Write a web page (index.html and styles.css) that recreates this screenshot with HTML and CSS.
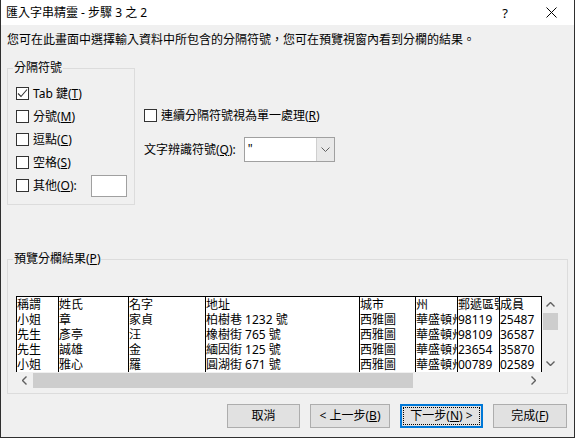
FILE: index.html
```html
<!DOCTYPE html>
<html lang="zh-Hant">
<head>
  <meta charset="UTF-8" />
  <title>匯入字串精靈 - 步驟 3 之 2</title>
  <link rel="stylesheet" href="styles.css">
</head>
<body>

  <div class="window">

    <!-- TITLE BAR -->
    <div class="titlebar">
      <span class="title">匯入字串精靈 - 步驟 3 之 2</span>
      <div class="controls">
        <span class="ctl help">?</span>
        <span class="ctl close">
          <svg width="11" height="11" viewBox="0 0 11 11"><path d="M0.5 0.5 L10.5 10.5 M10.5 0.5 L0.5 10.5" stroke="#000" stroke-width="1" fill="none"/></svg>
        </span>
      </div>
    </div>

    <div class="content">
      <p class="intro">您可在此畫面中選擇輸入資料中所包含的分隔符號，您可在預覽視窗內看到分欄的結果。</p>

      <!-- OPTIONS -->
      <div class="options">
        <fieldset class="group delimiters">
          <legend>分隔符號</legend>
          <div class="group-body">
            <div class="row">
              <span class="box checked">
                <svg width="11" height="11" viewBox="0 0 11 11"><polyline points="1,5.5 4,8.5 10,1.5" stroke="#333" stroke-width="1.1" fill="none"/></svg>
              </span>
              <span>Tab 鍵(<u>T</u>)</span>
            </div>
            <div class="row"><span class="box"></span><span>分號(<u>M</u>)</span></div>
            <div class="row"><span class="box"></span><span>逗點(<u>C</u>)</span></div>
            <div class="row"><span class="box"></span><span>空格(<u>S</u>)</span></div>
            <div class="row">
              <span class="box"></span><span>其他(<u>O</u>):</span>
              <span class="other-input"></span>
            </div>
          </div>
        </fieldset>

        <div class="side">
          <div class="row">
            <span class="box"></span><span>連續分隔符號視為單一處理(<u>R</u>)</span>
          </div>
          <div class="qualifier">
            <span>文字辨識符號(<u>Q</u>):</span>
            <div class="combo">
              <span class="combo-value">"</span>
              <span class="combo-btn">
                <svg width="9" height="5" viewBox="0 0 9 5"><polyline points="0.5,0.5 4.5,4.5 8.5,0.5" stroke="#606060" stroke-width="1" fill="none"/></svg>
              </span>
            </div>
          </div>
        </div>
      </div>

      <!-- PREVIEW -->
      <fieldset class="group preview">
        <legend>預覽分欄結果(<u>P</u>)</legend>
        <div class="group-body">
          <div class="preview-box">
            <div class="pv-table" id="pv-table"></div>

            <div class="vscroll">
              <span class="arrow">
                <svg width="9" height="5" viewBox="0 0 9 5"><polyline points="0.5,4.5 4.5,0.5 8.5,4.5" stroke="#606060" stroke-width="1.4" fill="none"/></svg>
              </span>
              <span class="vthumb"></span>
              <span class="vtrack"></span>
              <span class="arrow">
                <svg width="9" height="5" viewBox="0 0 9 5"><polyline points="0.5,0.5 4.5,4.5 8.5,0.5" stroke="#606060" stroke-width="1.4" fill="none"/></svg>
              </span>
            </div>

            <div class="hscroll">
              <span class="arrow">
                <svg width="5" height="9" viewBox="0 0 5 9"><polyline points="4.5,0.5 0.5,4.5 4.5,8.5" stroke="#606060" stroke-width="1.4" fill="none"/></svg>
              </span>
              <span class="hthumb"></span>
              <span class="htrack"></span>
              <span class="arrow">
                <svg width="5" height="9" viewBox="0 0 5 9"><polyline points="0.5,0.5 4.5,4.5 0.5,8.5" stroke="#606060" stroke-width="1.4" fill="none"/></svg>
              </span>
            </div>

            <div class="corner"></div>
          </div>
        </div>
      </fieldset>

      <!-- BUTTONS -->
      <div class="buttons">
        <button class="btn cancel">取消</button>
        <button class="btn back">&lt; 上一步(<u>B</u>)</button>
        <button class="btn next">下一步(<u>N</u>) &gt;</button>
        <button class="btn finish">完成(<u>F</u>)</button>
      </div>
    </div>
  </div>

  <script>
    const rows = [
      ["稱謂", "姓氏", "名字", "地址", "城市", "州", "郵遞區號", "成員"],
      ["小姐", "章", "家貞", "柏樹巷 1232 號", "西雅圖", "華盛頓州", "98119", "25487"],
      ["先生", "彥亭", "汪", "橡樹街 765 號", "西雅圖", "華盛頓州", "98109", "36587"],
      ["先生", "誠雄", "金", "緬因街 125 號", "西雅圖", "華盛頓州", "23654", "35870"],
      ["小姐", "雅心", "羅", "圓湖街 671 號", "西雅圖", "華盛頓州", "00789", "02589"]
    ];

    const table = document.getElementById("pv-table");
    rows.forEach(row => {
      row.forEach(value => {
        const cell = document.createElement("span");
        cell.textContent = value;
        table.appendChild(cell);
      });
    });
  </script>

</body>
</html>
```

FILE: styles.css
```css
* {
  box-sizing: border-box;
}

body {
  margin: 0;
  padding: 0;
  font-family: "Noto Sans", "Noto Sans CJK TC", sans-serif;
  font-size: 12px;
  color: #000;
  background: #f0f0f0;
}

.window {
  width: 575px;
  height: 438px;
  background: #f0f0f0;
  border: 1px solid #2f2f2f;
  border-top: none;
}

/* title bar */

.titlebar {
  height: 25px;
  background: #fff;
  display: flex;
  align-items: center;
  justify-content: space-between;
  padding-left: 5px;
}

.title {
  line-height: 16px;
}

.controls {
  display: flex;
  height: 100%;
}

.ctl {
  width: 46px;
  display: flex;
  align-items: center;
  justify-content: center;
}

.help {
  font-size: 13px;
  padding-top: 1px;
}

/* content */

.content {
  padding: 7px 6px 0 6px;
}

.intro {
  margin: 0;
  line-height: 16px;
}

.options {
  display: flex;
  gap: 9px;
  margin-top: 12px;
}

.group {
  margin: 0;
  padding: 0;
  border: 1px solid #dcdcdc;
  min-width: 0;
}

.group legend {
  margin-left: 5px;
  padding: 0 1px;
  line-height: 16px;
}

.delimiters {
  width: 128px;
}

.delimiters .group-body {
  padding: 6px 7px 7px 8px;
}

.row {
  height: 23px;
  display: flex;
  align-items: center;
  line-height: 16px;
}

.box {
  width: 13px;
  height: 13px;
  border: 1px solid #333;
  background: #fff;
  margin-right: 4px;
  flex-shrink: 0;
  display: flex;
  align-items: center;
  justify-content: center;
}

.other-input {
  margin-left: auto;
  width: 36px;
  height: 22px;
  background: #fff;
  border: 1px solid #a0a0a0;
}

.side {
  padding-top: 44px;
}

.qualifier {
  display: flex;
  align-items: center;
  gap: 8px;
  margin-top: 10px;
  line-height: 16px;
}

.combo {
  width: 91px;
  height: 25px;
  border: 1px solid #a0a0a0;
  background: #fff;
  display: flex;
}

.combo-value {
  flex: 1;
  padding: 3px 0 0 3px;
  line-height: 16px;
}

.combo-btn {
  width: 18px;
  background: #e9e9e9;
  border-left: 1px solid #cfcfcf;
  display: flex;
  align-items: center;
  justify-content: center;
}

/* preview */

.preview {
  margin-top: 46px;
}

.preview .group-body {
  padding: 29px 9px 5px 8px;
}

.preview-box {
  display: grid;
  grid-template-columns: 526px 16px;
  grid-template-rows: 76px 16px;
  background: #fff;
}

.pv-table {
  display: grid;
  grid-template-columns: 42px 70px 77px 154px 56px 42px 42px 43px;
  grid-auto-rows: 15px;
  border-top: 1px solid #000;
  font-size: 12px;
  overflow: hidden;
}

.pv-table span {
  border-left: 1px solid #000;
  line-height: 15px;
  white-space: nowrap;
  overflow: hidden;
}

.pv-table span:nth-child(8n) {
  border-right: 1px solid #000;
}

.vscroll {
  background: #f0f0f0;
  display: flex;
  flex-direction: column;
}

.vscroll .arrow {
  height: 17px;
  display: flex;
  align-items: center;
  justify-content: center;
  padding-left: 1px;
}

.vthumb {
  height: 17px;
  margin-left: 1px;
  background: #cdcdcd;
}

.vtrack {
  flex: 1;
}

.hscroll {
  background: #f0f0f0;
  display: flex;
  padding-top: 1px;
}

.hscroll .arrow {
  width: 17px;
  display: flex;
  align-items: center;
  justify-content: center;
}

.hthumb {
  width: 380px;
  background: #cdcdcd;
}

.htrack {
  flex: 1;
}

.corner {
  background: #f0f0f0;
}

/* buttons */

.buttons {
  display: flex;
  justify-content: flex-end;
  gap: 10px;
  margin-top: 10px;
  padding-right: 1px;
}

.btn {
  height: 24px;
  background: #e1e1e1;
  border: 1px solid #adadad;
  font-family: inherit;
  font-size: 12px;
  color: #000;
  padding: 0;
  line-height: 16px;
}

.cancel { width: 73px; }
.back { width: 80px; }
.next { width: 83px; }
.finish { width: 74px; }

.next {
  border: 2px solid #0078d7;
  outline: 1px dotted #000;
  outline-offset: -4px;
}
```
